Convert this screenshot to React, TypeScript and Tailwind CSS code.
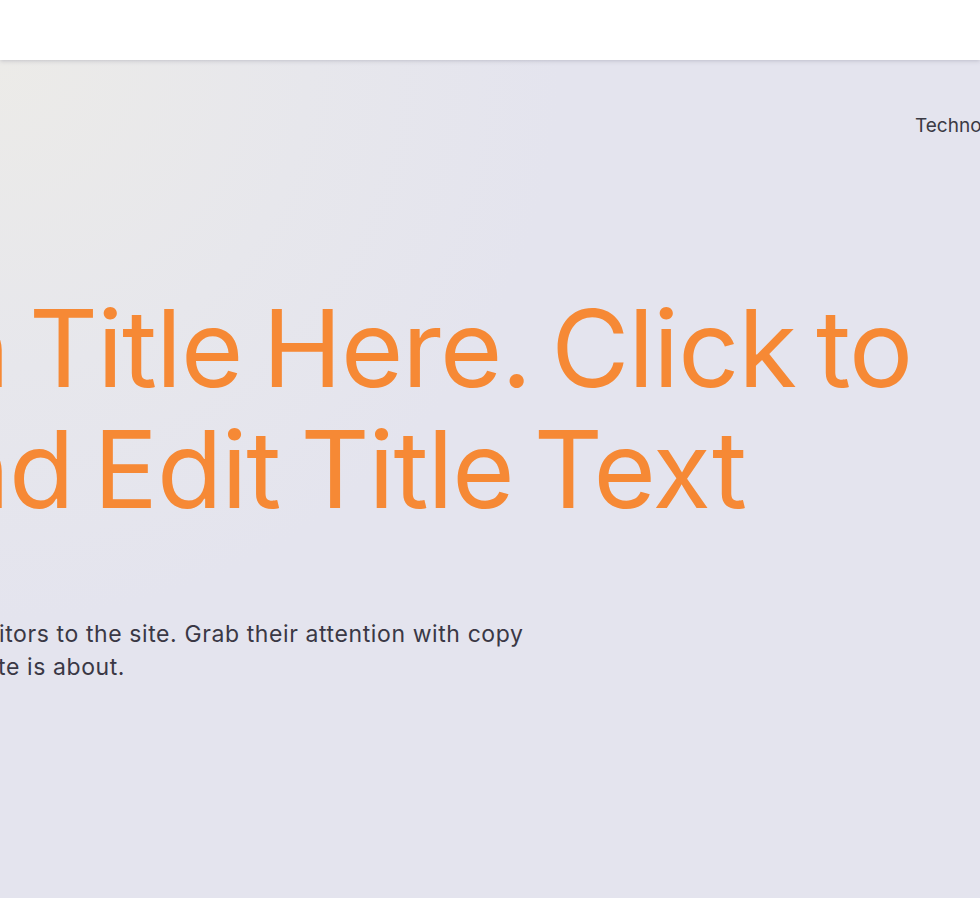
import React from "react";

export default function App() {
  return (
    <div className="w-[980px] h-[898px] overflow-hidden bg-[#e4e4ee] font-['Inter',sans-serif]">
      <header className="relative z-10 h-[60px] bg-white shadow-[0_1px_4px_rgba(120,120,140,0.35)]" />
      <main className="h-[838px] overflow-hidden bg-[radial-gradient(560px_circle_at_0px_0px,#ecebe8_0%,#e7e7ec_55%,#e4e4ee_100%)]">
        <nav className="pt-[52px] pl-[915px] whitespace-nowrap text-[19px] leading-[28px] text-[#3b3a44]">
          Technology
        </nav>
        <h1 className="mt-[148px] whitespace-nowrap text-[107px] font-normal leading-[121px] tracking-[-1px] [word-spacing:-9px] text-[#f68935]">
          <span className="block">
            <span className="-ml-[591px] inline-block w-[600px] text-right">Add a Main</span> Title Here. Click to
          </span>
          <span className="block">
            <span className="-ml-[591px] inline-block w-[600px] text-right">Add an</span>d Edit Title Text
          </span>
        </h1>
        <div className="mt-[88px] whitespace-nowrap text-[23px] leading-[33px] tracking-[0.6px] text-[#3a3845]">
          <span className="block">
            <span className="-ml-[601px] inline-block w-[600px] text-right">This is the space to introduce vis</span>itors to the site. Grab their attention with copy
          </span>
          <span className="block">
            <span className="-ml-[602px] inline-block w-[600px] text-right">that clearly states what the si</span>te is about.
          </span>
        </div>
      </main>
    </div>
  );
}
